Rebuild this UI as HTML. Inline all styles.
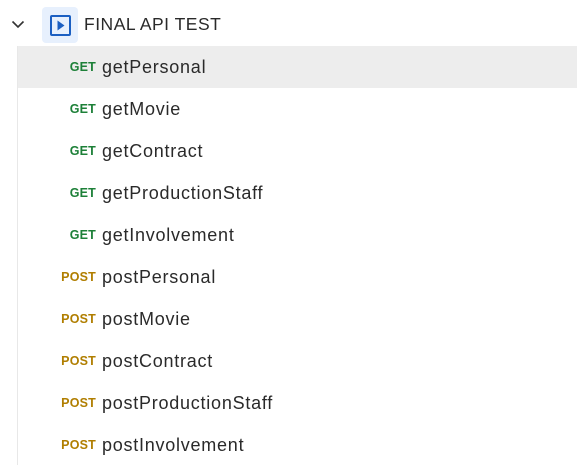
<!DOCTYPE html>
<html><head><style>
body{margin:0;width:577px;height:465px;background:#fff;font-family:"Liberation Sans",sans-serif;overflow:hidden;position:relative}
.vl{position:absolute;left:17px;top:46px;width:1px;height:419px;background:#e8e8e8}
.row{position:absolute;left:18px;width:559px;height:42px}
.m{position:absolute;right:calc(559px - 78px);top:0;line-height:42px;font-size:12.5px;font-weight:bold;letter-spacing:0.2px}
.n{position:absolute;left:84px;top:0;line-height:42px;font-size:18px;letter-spacing:0.75px;color:#2a2a2a}
.g{color:#1d8038}.p{color:#b07e00}
</style></head><body>
<svg style="position:absolute;left:11px;top:20px" width="14" height="9"><path d="M1.5 1.5 L7 7 L12.5 1.5" fill="none" stroke="#333" stroke-width="1.6"/></svg>
<div style="position:absolute;left:42px;top:7px;width:36px;height:36px;background:#e7f0fd;border-radius:4px"></div>
<div style="position:absolute;left:50px;top:15px;width:17px;height:17px;border:2px solid #1b5fc2;border-radius:2px"></div>
<svg style="position:absolute;left:50px;top:15px" width="21" height="21"><path d="M7.5 5.5 L14.5 10.5 L7.5 15.5 Z" fill="#1b5fc2"/></svg>
<div style="position:absolute;left:84px;top:4px;line-height:40px;font-size:17.5px;letter-spacing:0.5px;color:#2a2a2a">FINAL API TEST</div>
<div class="row" style="top:46px;background:#ededed;left:18px"></div>
<div class="vl"></div>
<div class="row" style="top:46px"><span class="m g">GET</span><span class="n">getPersonal</span></div>
<div class="row" style="top:88px"><span class="m g">GET</span><span class="n">getMovie</span></div>
<div class="row" style="top:130px"><span class="m g">GET</span><span class="n">getContract</span></div>
<div class="row" style="top:172px"><span class="m g">GET</span><span class="n">getProductionStaff</span></div>
<div class="row" style="top:214px"><span class="m g">GET</span><span class="n">getInvolvement</span></div>
<div class="row" style="top:256px"><span class="m p">POST</span><span class="n">postPersonal</span></div>
<div class="row" style="top:298px"><span class="m p">POST</span><span class="n">postMovie</span></div>
<div class="row" style="top:340px"><span class="m p">POST</span><span class="n">postContract</span></div>
<div class="row" style="top:382px"><span class="m p">POST</span><span class="n">postProductionStaff</span></div>
<div class="row" style="top:424px"><span class="m p">POST</span><span class="n">postInvolvement</span></div>
</body></html>
